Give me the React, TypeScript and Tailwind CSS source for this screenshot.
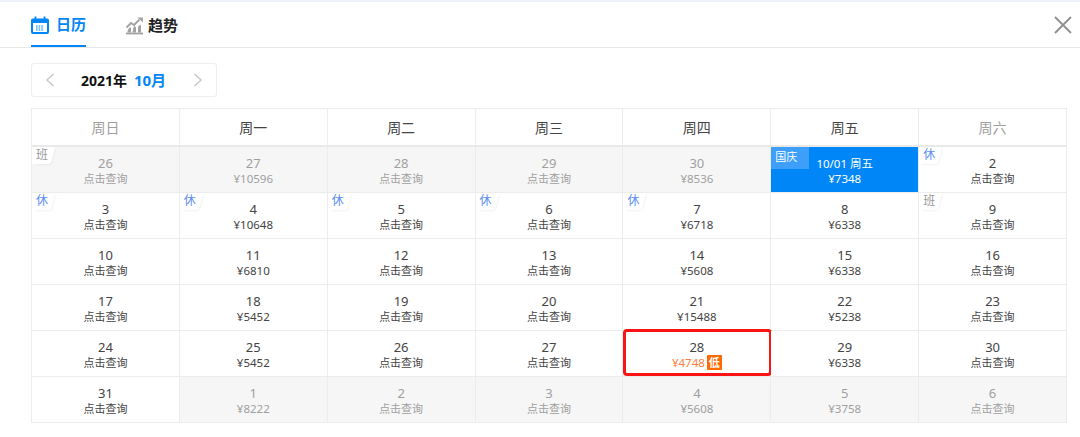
import React from 'react';

type Day = {
    day: string;
    price?: string;
    off?: boolean;
    tag?: '休' | '班';
};

const weekDays = ['周日', '周一', '周二', '周三', '周四', '周五', '周六'];

const rows: Day[][] = [
    [
        { day: '26', off: true, tag: '班' },
        { day: '27', price: '¥10596', off: true },
        { day: '28', off: true },
        { day: '29', off: true },
        { day: '30', price: '¥8536', off: true },
        { day: '10/01 周五', price: '¥7348' },
        { day: '2', tag: '休' },
    ],
    [
        { day: '3', tag: '休' },
        { day: '4', price: '¥10648', tag: '休' },
        { day: '5', tag: '休' },
        { day: '6', tag: '休' },
        { day: '7', price: '¥6718', tag: '休' },
        { day: '8', price: '¥6338' },
        { day: '9', tag: '班' },
    ],
    [
        { day: '10' },
        { day: '11', price: '¥6810' },
        { day: '12' },
        { day: '13' },
        { day: '14', price: '¥5608' },
        { day: '15', price: '¥6338' },
        { day: '16' },
    ],
    [
        { day: '17' },
        { day: '18', price: '¥5452' },
        { day: '19' },
        { day: '20' },
        { day: '21', price: '¥15488' },
        { day: '22', price: '¥5238' },
        { day: '23' },
    ],
    [
        { day: '24' },
        { day: '25', price: '¥5452' },
        { day: '26' },
        { day: '27' },
        { day: '28', price: '¥4748' },
        { day: '29', price: '¥6338' },
        { day: '30' },
    ],
    [
        { day: '31' },
        { day: '1', price: '¥8222', off: true },
        { day: '2', off: true },
        { day: '3', off: true },
        { day: '4', price: '¥5608', off: true },
        { day: '5', price: '¥3758', off: true },
        { day: '6', off: true },
    ],
];

const CalendarIcon = () => (
    <svg width="18" height="18" viewBox="0 0 18 18" fill="none">
        <path d="M1 4.500a1 1 0 0 1 1-1h14a1 1 0 0 1 1 1V16a1 1 0 0 1-1 1H2a1 1 0 0 1-1-1z" stroke="#0086f6" strokeWidth="2" />
        <rect x="1" y="3.500" width="16" height="3.500" fill="#0086f6" />
        <path d="M4.500 0.500v3M13.500 0.500v3" stroke="#0086f6" strokeWidth="1.800" />
        <path d="M5 10h8M5 12h8M5 14h8" stroke="#0086f6" strokeWidth="1.200" strokeDasharray="1.600 1" />
    </svg>
);

const TrendIcon = () => (
    <svg width="19" height="18" viewBox="0 0 19 18" fill="none">
        <path d="M1 16.500h17" stroke="#a3a3a3" strokeWidth="1.800" />
        <path d="M2 15.500c1-1 1-3.500 2-4.500s1.500 0 2 0v4.500z" fill="#a3a3a3" />
        <path d="M7.500 15.500c.5-2 .5-5 1.500-6s1.500.5 2 1v5z" fill="#a3a3a3" />
        <path d="M13 15.500v-6l3-2v8z" fill="#a3a3a3" />
        <path d="M1.500 10.500l4.500-4.500 3 2 5.500-5.500" stroke="#a3a3a3" strokeWidth="1.800" />
        <path d="M12.500 0.500H18V5.500z" fill="#a3a3a3" />
    </svg>
);

const Cell = ({ item, row, col }: { item: Day; row: number; col: number }) => {
    const selected = row === 0 && col === 5;
    const lowest = row === 4 && col === 4;

    let bg = 'bg-white';
    if (item.off) bg = 'bg-[#f6f6f6]';
    if (selected) bg = 'bg-[#0086f6]';

    let dayColor = 'text-[#444444]';
    let subColor = 'text-[#444444]';
    if (item.off) {
        dayColor = 'text-[#a0a0a0]';
        subColor = 'text-[#a0a0a0]';
    }
    if (selected) {
        dayColor = 'text-white';
        subColor = 'text-white';
    }
    if (lowest) subColor = 'text-[#ff7d3c]';

    return (
        <div className={`relative flex flex-col items-center justify-center h-[46px] pt-[1px] border-r border-b border-[#ececec] ${bg}`}>
            {item.tag && (
                <>
                    <span className="absolute left-[4px] top-0 w-[17px] h-[17px] bg-white rounded-br-[3px] -skew-x-[14deg] shadow-[1px_1px_2px_rgba(0,0,0,0.05)]" />
                    <span className="absolute left-0 top-0 w-[14px] h-[17px] bg-white" />
                    <span
                        className={`absolute left-[4px] top-0 text-[12px] leading-[15px] ${item.tag === '休' ? 'text-[#5b8def]' : 'text-[#999999]'}`}
                    >
                        {item.tag}
                    </span>
                </>
            )}
            {selected && (
                <span className="absolute left-0 top-0 w-[38px] h-[22px] pl-[4px] bg-[#3d9ffa] text-white text-[11px] leading-[19px]">
                    国庆
                </span>
            )}
            <div className={`${selected ? 'text-[11.5px]' : 'text-[13px]'} leading-[17px] ${dayColor}`}>{item.day}</div>
            <div className={`flex items-center gap-[2px] h-[14px] leading-[14px] ${item.price ? 'text-[11.5px]' : 'text-[11px]'} ${subColor}`}>
                <span>{item.price ?? '点击查询'}</span>
                {lowest && (
                    <span className="w-[15px] h-[15px] rounded-[1px] bg-[#ff6a00] text-white text-[11px] leading-[15px] font-bold text-center">
                        低
                    </span>
                )}
            </div>
            {lowest && (
                <div className="absolute left-0 -top-[2px] -right-[2px] bottom-0 border-[3px] border-[#fa1414] rounded-[4px]" />
            )}
        </div>
    );
};

const App = () => {
    return (
        <div className="w-[1080px] h-[437px] overflow-hidden bg-white font-['Noto_Sans','Noto_Sans_CJK_SC',sans-serif]">
            <div className="h-[2px] bg-[#eef1f6]" />
            <div className="flex items-center justify-between h-[46px] pl-[31px] pr-[7px] border-b border-[#e8e8e8]">
                <div className="flex h-full">
                    <div className="flex items-center gap-[7px] h-full pt-[2px] border-b-[2px] border-[#0086f6] text-[15px] font-bold text-[#0086f6]">
                        <CalendarIcon />
                        <span>日历</span>
                    </div>
                    <div className="flex items-center gap-[4px] ml-[39px] h-full pt-[2px] text-[15px] font-bold text-[#222222]">
                        <TrendIcon />
                        <span>趋势</span>
                    </div>
                </div>
                <svg width="20" height="20" viewBox="0 0 20 20" fill="none">
                    <path d="M2 2l16 16M18 2L2 18" stroke="#8f8f8f" strokeWidth="1.800" />
                </svg>
            </div>

            <div className="pl-[31px] pt-[15px]">
                <div className="flex items-center justify-between w-[186px] h-[34px] px-[13px] border border-[#eeeeee] rounded-[3px]">
                    <svg width="10" height="14" viewBox="0 0 10 14" fill="none">
                        <path d="M8.500 1L2 7l6.500 6" stroke="#c8c8c8" strokeWidth="1.500" />
                    </svg>
                    <div className="flex items-center gap-[7px] mr-[1px] font-bold">
                        <span className="text-[14px] text-[#111111]">2021年</span>
                        <span className="text-[15px] text-[#0086f6]">10月</span>
                    </div>
                    <svg width="10" height="14" viewBox="0 0 10 14" fill="none">
                        <path d="M1.500 1L8 7l-6.500 6" stroke="#c8c8c8" strokeWidth="1.500" />
                    </svg>
                </div>

                <div className="w-[1036px] mt-[11px] border-t border-l border-[#ececec]">
                    <div className="grid grid-cols-7 h-[38px] border-b-[2px] border-[#e9e9e9]">
                        {weekDays.map((name, i) => (
                            <div
                                key={name}
                                className={`flex items-center justify-center border-r border-[#ececec] text-[14px] ${i === 0 || i === 6 ? 'text-[#a0a0a0]' : 'text-[#444444]'}`}
                            >
                                {name}
                            </div>
                        ))}
                    </div>
                    {rows.map((row, r) => (
                        <div key={r} className="grid grid-cols-7">
                            {row.map((item, c) => (
                                <Cell key={c} item={item} row={r} col={c} />
                            ))}
                        </div>
                    ))}
                </div>
            </div>
        </div>
    );
};

export default App;
